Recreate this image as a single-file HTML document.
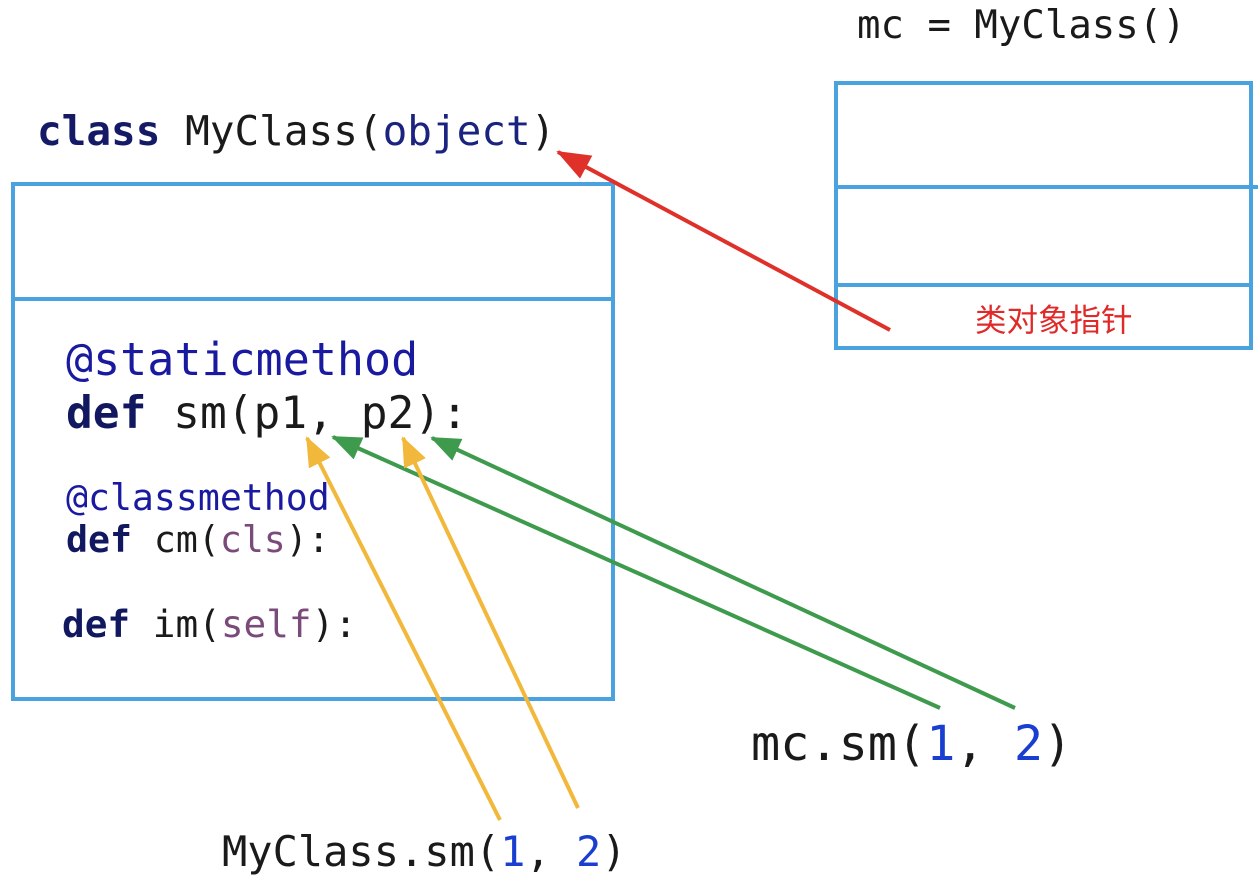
<!DOCTYPE html>
<html><head><meta charset="utf-8"><style>
html,body{margin:0;padding:0;background:#fff;width:1260px;height:878px;overflow:hidden}
text{font-family:"DejaVu Sans Mono","Liberation Mono",monospace}
</style></head><body>
<svg width="1260" height="878" viewBox="0 0 1260 878" xmlns="http://www.w3.org/2000/svg">
<defs>
<marker id="r" markerUnits="userSpaceOnUse" markerWidth="34" markerHeight="26" refX="32" refY="13" orient="auto"><path d="M0,0 L34,13 L0,26 Z" fill="#e0302a"/></marker>
<marker id="g" markerUnits="userSpaceOnUse" markerWidth="30" markerHeight="24" refX="28" refY="12" orient="auto"><path d="M0,0 L30,12 L0,24 Z" fill="#3e9a4c"/></marker>
<marker id="y" markerUnits="userSpaceOnUse" markerWidth="30" markerHeight="24" refX="28" refY="12" orient="auto"><path d="M0,0 L30,12 L0,24 Z" fill="#f2b83c"/></marker>
</defs>
<g fill="none" stroke="#4aa3df" stroke-width="4">
<rect x="13" y="184" width="600" height="515"/>
<line x1="11" y1="299" x2="611" y2="299"/>
<rect x="836" y="83" width="415" height="265"/>
<line x1="836" y1="187" x2="1258" y2="187"/>
<line x1="836" y1="285" x2="1251" y2="285"/>
</g>
<text x="857" y="38" font-size="39" fill="#1a1a1a">mc = MyClass()</text>
<text x="37" y="145" font-size="41" fill="#1a1a1a"><tspan fill="#141a66" font-weight="bold">class</tspan> MyClass(<tspan fill="#1a237e">object</tspan>)</text>
<text x="66" y="375" font-size="45" fill="#1a1aa0">@staticmethod</text>
<text x="66" y="428" font-size="44.5" fill="#1a1a1a"><tspan fill="#111860" font-weight="bold">def</tspan> sm(p1, p2):</text>
<text x="66" y="510" font-size="36.5" fill="#1a1aa0">@classmethod</text>
<text x="66" y="552" font-size="36.5" fill="#1a1a1a"><tspan fill="#111860" font-weight="bold">def</tspan> cm(<tspan fill="#7a4a7a">cls</tspan>):</text>
<text x="62" y="637" font-size="37.7" fill="#1a1a1a"><tspan fill="#111860" font-weight="bold">def</tspan> im(<tspan fill="#7a4a7a">self</tspan>):</text>
<text x="975" y="331" font-size="31.5" fill="#e02a2a" style="font-family:'Liberation Sans','Noto Sans CJK SC',sans-serif">类对象指针</text>
<text x="751" y="760" font-size="48.5" fill="#1a1a1a">mc.sm(<tspan fill="#1a3fd0">1</tspan>, <tspan fill="#1a3fd0">2</tspan>)</text>
<text x="222" y="866" font-size="42" fill="#1a1a1a">MyClass.sm(<tspan fill="#1a3fd0">1</tspan>, <tspan fill="#1a3fd0">2</tspan>)</text>
<g stroke-width="4" fill="none">
<line x1="890" y1="330" x2="558" y2="152" stroke="#e0302a" marker-end="url(#r)"/>
<line x1="940" y1="708" x2="333" y2="437" stroke="#3e9a4c" marker-end="url(#g)"/>
<line x1="1015" y1="708" x2="432" y2="438" stroke="#3e9a4c" marker-end="url(#g)"/>
<line x1="500" y1="820" x2="307" y2="438" stroke="#f2b83c" marker-end="url(#y)"/>
<line x1="578" y1="808" x2="403" y2="438" stroke="#f2b83c" marker-end="url(#y)"/>
</g>
</svg>
</body></html>
